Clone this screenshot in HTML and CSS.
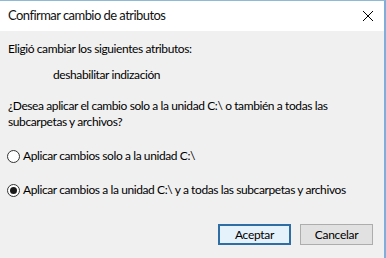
FILE: index.html
```html
<!DOCTYPE html>
<html lang="es">
<head>
<meta charset="utf-8">
<link rel="stylesheet" href="styles.css">
</head>
<body>
<div class="dialog">
  <div class="titlebar">
    <span class="title">Confirmar cambio de atributos</span>
    <svg class="close" width="12" height="12" viewBox="0 0 12 12"><path d="M1 1L11 11M11 1L1 11" stroke="#000" stroke-width="1" fill="none"/></svg>
  </div>
  <div class="content">
    <p class="line intro">Eligió cambiar los siguientes atributos:</p>
    <p class="line attr">deshabilitar indización</p>
    <p class="line question">¿Desea aplicar el cambio solo a la unidad C:\ o también a todas las subcarpetas y archivos?</p>
    <div class="radio-row first"><span class="radio"></span><span>Aplicar cambios solo a la unidad C:\</span></div>
    <div class="radio-row second"><span class="radio checked"></span><span>Aplicar cambios a la unidad C:\ y a todas las subcarpetas y archivos</span></div>
    <div class="buttons">
      <button class="btn default">Aceptar</button>
      <button class="btn">Cancelar</button>
    </div>
  </div>
</div>
</body>
</html>
```
FILE: styles.css
```css
html, body {
  margin: 0;
  padding: 0;
  width: 386px;
  height: 258px;
  overflow: hidden;
  background: #f0f0f0;
}
.dialog {
  box-sizing: border-box;
  width: 386px;
  height: 258px;
  border-top: 1px solid #8fbad6;
  border-right: 2px solid #7eaedc;
  font-family: Lato, "Noto Sans", sans-serif;
  font-size: 12px;
  letter-spacing: -0.4px;
  color: #000;
  display: flex;
  flex-direction: column;
}
.titlebar {
  height: 30px;
  background: #fff;
  display: flex;
  align-items: center;
  justify-content: space-between;
  padding: 0 10px 0 8px;
  flex-shrink: 0;
}
.title {
  font-size: 13px;
  letter-spacing: -0.55px;
  color: #111;
  margin-top: -2px;
}
.close {
  display: block;
}
.content {
  flex: 1;
  padding: 8px 8px 0 8px;
  display: flex;
  flex-direction: column;
}
.line {
  margin: 0;
  line-height: 16px;
}
.intro {
  margin-top: 2px;
}
.attr {
  margin-top: 10px;
  padding-left: 45px;
}
.question {
  margin-top: 15px;
  width: 330px;
}
.radio-row {
  display: flex;
  align-items: center;
  gap: 3px;
  height: 16px;
  line-height: 16px;
  white-space: nowrap;
}
.radio-row.first {
  margin-top: 18px;
  margin-left: -1px;
}
.radio-row.second {
  margin-top: 18px;
  margin-left: -1px;
}
.radio {
  box-sizing: border-box;
  width: 13px;
  height: 13px;
  border: 1px solid #333;
  border-radius: 50%;
  background: #fff;
  position: relative;
  flex-shrink: 0;
}
.radio.checked::after {
  content: "";
  position: absolute;
  left: 2px;
  top: 2px;
  width: 7px;
  height: 7px;
  border-radius: 50%;
  background: #1a1a1a;
}
.buttons {
  display: flex;
  justify-content: flex-end;
  gap: 9px;
  margin-top: 26px;
  padding-right: 3px;
}
.btn {
  box-sizing: border-box;
  width: 73px;
  height: 21px;
  font-family: inherit;
  font-size: 12px;
  letter-spacing: -0.3px;
  background: #e1e1e1;
  border: 1px solid #adadad;
  padding: 0;
  color: #000;
}
.btn.default {
  width: 73px;
  background: #e5f1fb;
  border: 2px solid #2f6ea5;
}
```
